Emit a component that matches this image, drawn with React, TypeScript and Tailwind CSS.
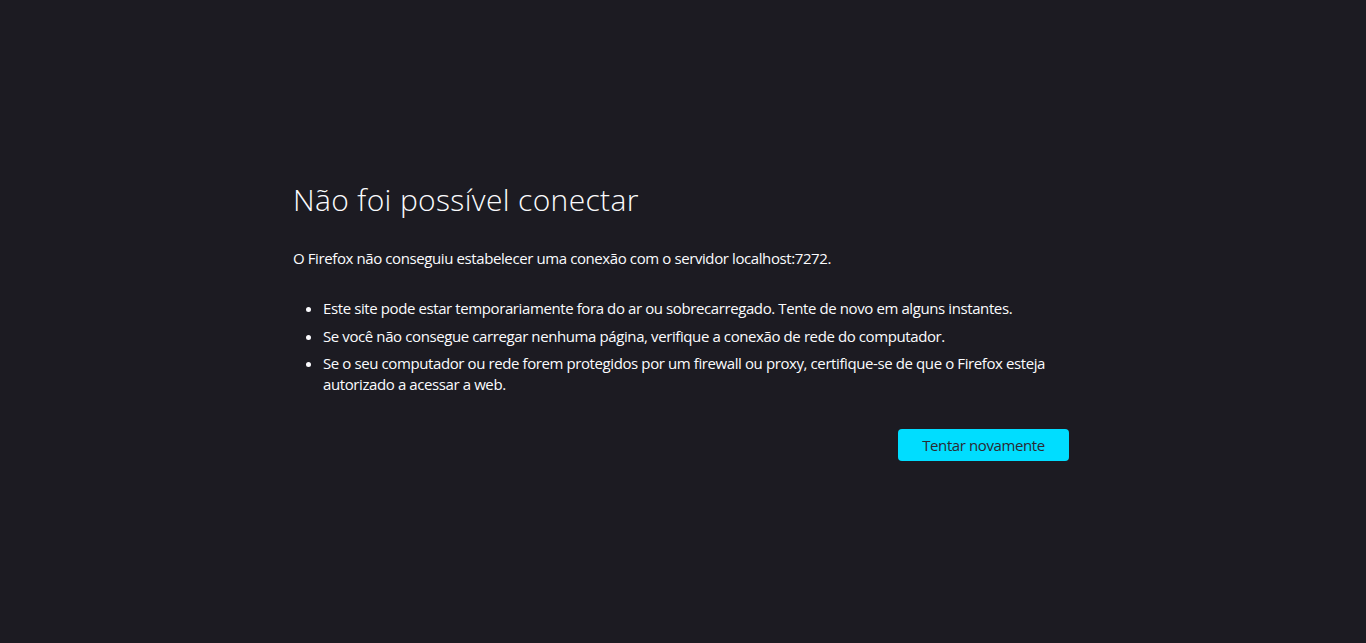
import React from "react";

const items = [
  "Este site pode estar temporariamente fora do ar ou sobrecarregado. Tente de novo em alguns instantes.",
  "Se você não consegue carregar nenhuma página, verifique a conexão de rede do computador.",
  "Se o seu computador ou rede forem protegidos por um firewall ou proxy, certifique-se de que o Firefox esteja autorizado a acessar a web.",
];

export default function App() {
  return (
    <div
      className="h-[643px] w-full bg-[#1c1b22] text-[#fbfbfe] flex items-center justify-center pb-[2px]"
      style={{ fontFamily: '"Open Sans", "Noto Sans", sans-serif' }}
    >
      <div className="w-[780px] flex flex-col">
        <h1 className="text-[30px] font-light leading-[40px] tracking-[0.35px] text-[#fbfbfe]">
          Não foi possível conectar
        </h1>
        <p className="mt-[28px] text-[15px] leading-[21px] tracking-[-0.4px]">
          O Firefox não conseguiu estabelecer uma conexão com o servidor localhost:7272.
        </p>
        <ul className="mt-[29px] pl-[30px] list-disc text-[15px] leading-[21px] tracking-[-0.4px] flex flex-col gap-[6.5px] pr-[10px]">
          {items.map((t) => (
            <li key={t}>{t}</li>
          ))}
        </ul>
        <div className="mt-[34px] flex justify-end pr-[4px]">
          <button className="h-[32px] w-[171px] rounded-[4px] bg-[#00ddff] text-[#2b2a33] text-[15px] tracking-[-0.4px]">
            Tentar novamente
          </button>
        </div>
      </div>
    </div>
  );
}
